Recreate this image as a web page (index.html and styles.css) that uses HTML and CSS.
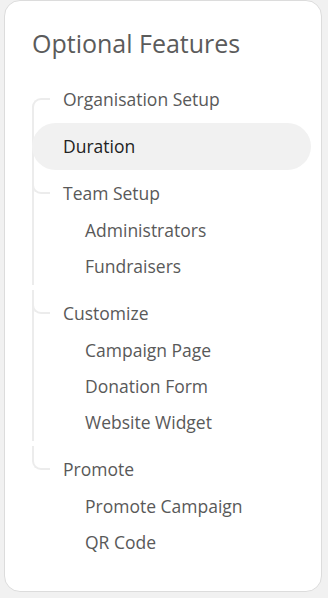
FILE: index.html
```html
<!DOCTYPE html>
<html lang="en">

<head>
    <meta charset="UTF-8">
    <meta name="viewport" content="width=device-width, initial-scale=1.0">
    <title>Optional Features</title>
    <link rel="stylesheet" href="styles.css">
</head>

<body>
    <aside class="card">
        <h2 class="card-title">Optional Features</h2>
        <ul class="tree">
            <li class="tree-item"><a class="tree-link" href="#">Organisation Setup</a></li>
            <li class="tree-item"><a class="tree-link active" href="#">Duration</a></li>
            <li class="tree-item">
                <a class="tree-link" href="#">Team Setup</a>
                <ul class="sub-list">
                    <li><a class="sub-link" href="#">Administrators</a></li>
                    <li><a class="sub-link" href="#">Fundraisers</a></li>
                </ul>
            </li>
            <li class="tree-item">
                <a class="tree-link" href="#">Customize</a>
                <ul class="sub-list">
                    <li><a class="sub-link" href="#">Campaign Page</a></li>
                    <li><a class="sub-link" href="#">Donation Form</a></li>
                    <li><a class="sub-link" href="#">Website Widget</a></li>
                </ul>
            </li>
            <li class="tree-item">
                <a class="tree-link" href="#">Promote</a>
                <ul class="sub-list">
                    <li><a class="sub-link" href="#">Promote Campaign</a></li>
                    <li><a class="sub-link" href="#">QR Code</a></li>
                </ul>
            </li>
        </ul>
    </aside>
</body>

</html>
```

FILE: styles.css
```css
body {
    margin: 0;
    background: #f1f1f1;
    font-family: "Open Sans", "Noto Sans", sans-serif;
}

.card {
    box-sizing: border-box;
    height: 592px;
    margin: 0 6px 0 4px;
    padding: 25px 10px 0 27px;
    background: #fff;
    border: 1px solid #dcdcdc;
    border-radius: 16px;
}

.card-title {
    margin: 0 0 16px;
    font-size: 25px;
    font-weight: 400;
    line-height: 34px;
    color: #5b5b5b;
}

.tree {
    margin: 0;
    padding: 0;
    list-style: none;
}

.tree-item {
    position: relative;
}

/* connectors of the tree */
.tree-item::before {
    content: "";
    position: absolute;
    left: 0;
    top: 0;
    width: 16px;
    height: 22px;
    border-left: 2px solid #ececec;
    border-bottom: 2px solid #ececec;
    border-bottom-left-radius: 9px;
}

.tree-item:first-child::before {
    top: 22px;
    height: 16px;
    border-bottom: 0;
    border-top: 2px solid #ececec;
    border-radius: 9px 0 0 0;
}

.tree-item:not(:last-child)::after {
    content: "";
    position: absolute;
    left: 0;
    top: 0;
    bottom: -1px;
    border-left: 2px solid #ececec;
}

.tree-item:first-child::after {
    top: 30px;
}

.tree-link {
    position: relative;
    z-index: 1;
    display: block;
    height: 47px;
    padding-left: 31px;
    line-height: 47px;
    font-size: 17.5px;
    color: #595959;
    text-decoration: none;
    border-radius: 24px;
}

.tree-link.active {
    background: #f1f1f1;
    color: #222;
}

.sub-list {
    margin: -5px 0 6px;
    padding: 0;
    list-style: none;
}

.sub-link {
    display: block;
    padding-left: 53px;
    line-height: 36px;
    font-size: 17.5px;
    color: #595959;
    text-decoration: none;
}
```
